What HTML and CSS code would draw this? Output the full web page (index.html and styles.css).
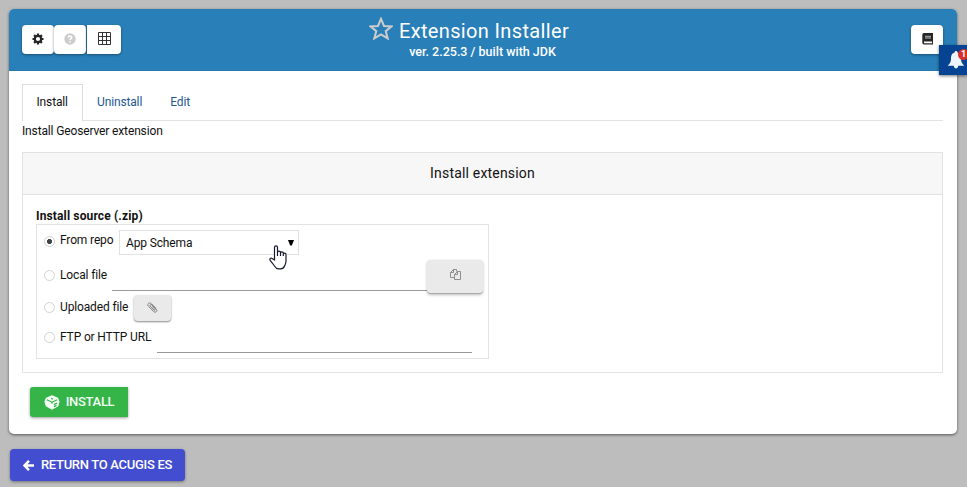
FILE: index.html
```
<!DOCTYPE html>
<html lang="en">
<head>
<meta charset="utf-8">
<title>Extension Installer</title>
<link rel="stylesheet" href="styles.css">
</head>
<body>
<main class="card">
  <header class="header">
    <div class="tools">
      <button class="tool" aria-label="Configuration"><svg width="12" height="12" viewBox="0 0 12 12"><circle cx="6" cy="6" r="3.2" fill="none" stroke="#252525" stroke-width="2.2"/><path d="M6 .5v2M6 9.5v2M.5 6h2M9.5 6h2M2.1 2.1l1.4 1.4M8.5 8.5l1.4 1.4M2.1 9.9l1.4-1.4M8.5 3.5l1.4-1.4" stroke="#252525" stroke-width="2.2"/></svg></button>
      <button class="tool tool-muted" aria-label="Help"><svg width="12" height="12" viewBox="0 0 12 12"><circle cx="6" cy="6" r="5.7" fill="#ccc"/><path d="M4.2 4.6C4.3 2.5 7.9 2.6 7.7 4.6 7.6 5.7 6 5.6 6 7.1M6 8v1.5" fill="none" stroke="#fff" stroke-width="1.5"/></svg></button>
      <button class="tool tool-grid" aria-label="Modules"><svg width="13" height="13" viewBox="0 0 13 13"><path d="M.5.5h12v12H.5zM4.5.5v12M8.5.5v12M.5 4.5h12M.5 8.5h12" fill="none" stroke="#333"/></svg></button>
    </div>
    <div class="heading">
      <h1><svg class="star" width="24" height="23" viewBox="0 0 24 23"><path d="M12 1.8l3 7.2 7.6.4-5.9 4.7 2 7.3-6.7-4-6.7 4 2-7.3L1.4 9.4 9 9z" fill="none" stroke="#ccc" stroke-width="2"/></svg><span>Extension Installer</span></h1>
      <p>ver. 2.25.3 / built with JDK</p>
    </div>
    <button class="tool tool-book" aria-label="Documentation"><svg width="11" height="12" viewBox="0 0 11 12"><path d="M2 0h9v11.5H2A1.8 1.8 0 0 1 .3 9.8V1.8A1.8 1.8 0 0 1 2 0z" fill="#252525"/><path d="M3 3.3h6M3 5h6" stroke="#bbb"/><path d="M2 8.6h8v1.6H2z" fill="#fff"/></svg></button>
  </header>
  <div class="content">
    <nav class="tabs"><a class="tab active">Install</a><a class="tab">Uninstall</a><a class="tab">Edit</a></nav>
    <p class="description">Install Geoserver extension</p>
    <section class="panel">
      <h2>Install extension</h2>
      <div class="panel-body">
        <div class="label">Install source (.zip)</div>
        <div class="sources">
          <div class="row row-repo"><i class="radio checked"></i><span class="name">From repo</span>
            <div class="select"><span>App Schema</span><svg width="6" height="6" viewBox="0 0 6 6"><path d="M0 0h6L3.8 5.5H2.2z"/></svg>
              <svg class="pointer" width="18" height="25" viewBox="0 0 18 25"><path d="M5.5 15V2.5C5.5.3 8.5.3 8.5 2.5V11 7.5c0-1.8 3-1.8 3 0V11 8c0-1.6 2.8-1.6 2.8 0v3V9.2c0-1.4 2.7-1.4 2.7.2V16c0 2.5-.8 3.5-1.5 5-.6 1.9-2 2.9-4 2.9H9.5c-2.2 0-3-1.2-4-2.9L1.2 15.4c-1-1.8.6-3 2-1.8z" fill="#fff" stroke="#16182b" stroke-width="1.2"/></svg>
            </div></div>
          <div class="row row-local"><i class="radio"></i><span class="name">Local file</span><span class="field"></span>
            <button class="file-button" aria-label="Browse"><svg width="11" height="11" viewBox="0 0 11 11"><path d="M3.5 2.5V.5h3v2M3.5.5l-3 3v5H4M3.5.5v3h-3M7.5 2.5h3v8h-6v-5zM7.5 2.5v3h-3" fill="none" stroke="#858585" stroke-width=".9"/></svg></button></div>
          <div class="row row-upload"><i class="radio"></i><span class="name">Uploaded file</span>
            <button class="attach-button" aria-label="Attach"><svg width="11" height="11" viewBox="0 0 11 11"><path d="M8.8 6.2L4.4 1.7C2.2-.3-.5 2.1 1.5 4.3l5.2 5.3c2 1.6 4.2-.5 2.6-2.4L5 2.9C3.7 1.7 2.2 3.3 3.4 4.5l3.7 3.7c.8.7 1.6-.2.9-.9L4.7 4" fill="none" stroke="#777" stroke-width=".9"/></svg></button></div>
          <div class="row row-url"><i class="radio"></i><span class="name">FTP or HTTP URL</span><span class="field"></span></div>
        </div>
      </div>
    </section>
    <button class="install"><svg width="16" height="15" viewBox="0 0 16 15"><path d="M8 .2l6 2.5 1.5 3.8-1.2 4.8L8 14.8l-6.2-3.5L.4 6.5 2 2.7z" fill="#f4fff5"/><path d="M2.8 4.7L8 7.2l5.3-2.5M8 7.2v1.5M7 3.2l2 1M10 9.6l3-1.5M10 11.6l2.5-1.2" fill="none" stroke="#35b548" stroke-width="1.2"/></svg><span>INSTALL</span></button>
  </div>
</main>
<button class="return"><svg width="11" height="11" viewBox="0 0 11 11"><path d="M6 .8L1.5 5.5 6 10.2M1.5 5.5H11" fill="none" stroke="#fff" stroke-width="2.5"/></svg><span>RETURN TO ACUGIS ES</span></button>
<aside class="notifications"><svg width="18" height="18" viewBox="0 0 18 18"><path d="M9 0c1 0 1.4.7 1.4 1.5C13.5 2.3 14 5 14 8c0 3 1.2 4.6 3.3 6.7H.7C2.8 12.6 4 11 4 8c0-3 .5-5.7 3.6-6.5C7.6.7 8 0 9 0zM6.7 14.5h4.6c-.3 3.9-4.3 3.9-4.6 0z" fill="#edf4fa"/></svg><span class="badge">1</span></aside>
</body>
</html>
```
FILE: styles.css
```
* { box-sizing: border-box; }
body { margin: 0; height: 487px; padding: 9px 10px 0 9px; overflow: hidden; background: #bdbdbd; font: 12px/18px Roboto, sans-serif; letter-spacing: -.14px; color: #111; }
button { border: 0; padding: 0; font: inherit; display: flex; align-items: center; justify-content: center; }
h1, h2, p { margin: 0; font-weight: 400; }
svg { display: block; flex: none; }
.card { height: 425px; background: #fff; border-radius: 5px; overflow: hidden; box-shadow: 0 1px 3px #555; }
.header { height: 62px; padding: 16px 14px 0 13px; display: grid; grid-template-columns: 99px 1fr 99px; align-items: start; background: #2980b9; border-bottom: 1px solid #2679b1; }
.tools { display: flex; }
.tool { width: 32px; height: 29px; background: #fff; border-radius: 4px; box-shadow: 0 1px 3px #00000066; padding-bottom: 2px; }
.tool-grid { width: 34px; margin-left: 1px; border-radius: 0 4px 4px 0; }
.tool-book { justify-self: end; }
.heading { color: #fff; margin-top: -10px; text-align: center; }
.heading h1 { display: flex; justify-content: center; gap: 6px; font-size: 20px; line-height: 28px; height: 28px; letter-spacing: .35px; margin-right: 27px; }
.heading h1 span { padding-top: 2px; }
.star { margin-top: 2px; }
.heading p { font-size: 12.5px; line-height: 14px; font-weight: 500; margin-top: 2px; letter-spacing: 0; }
.content { padding: 13px 14px 0 13px; }
.tabs { display: flex; height: 37px; border-bottom: 1px solid #e3e3e3; }
.tab { height: 36px; padding: 9px 14px; color: #24598f; }
.tab.active { width: 61px; height: 37px; border: 1px solid #ddd; border-bottom: 0; background: #fff; color: #111; padding: 8px 13.5px; }
.description { line-height: 20px; height: 31px; }
.panel { height: 221px; border: 1px solid #e3e3e3; }
.panel h2 { height: 42px; border-bottom: 1px solid #e3e3e3; background: #f7f7f7; font-size: 14px; line-height: 40px; text-align: center; letter-spacing: .18px; }
.panel-body { padding: 12px 13px 0; }
.label { height: 17px; font-weight: 700; letter-spacing: .14px; }
.sources { width: 453px; height: 135px; border: 1px solid #e3e3e3; padding: 0 5px 0 7px; }
.row { display: flex; align-items: flex-start; }
.row-repo { height: 35px; padding-top: 5px; }
.row-local { height: 34px; }
.row-upload { height: 34px; }
.row-url { height: 30px; }
.radio { width: 11px; height: 11px; flex: none; border: 1px solid #d2d2d2; border-radius: 50%; margin: 10px 5px 0 0; }
.row-repo .radio { margin-top: 6px; }
.checked { background: radial-gradient(circle, #444 0 2.2px, transparent 2.9px); }
.name { width: 47px; margin-top: 6px; white-space: nowrap; }
.row-repo .name { width: 54px; margin-top: 1px; }
.select { position: relative; width: 180px; height: 25px; margin-left: 5px; border: 1px solid #e1e1e1; padding: 0 4px 0 6px; display: flex; align-items: center; justify-content: space-between; }
.pointer { position: absolute; left: 149px; top: 14px; z-index: 1; }
.field { height: 31px; width: 315px; margin-left: 5px; border-bottom: 1px solid #999; }
.file-button { width: 56px; height: 34px; background: #eaeaea; border-radius: 4px; border-bottom: 1px solid #aaa; box-shadow: 0 1px 3px #0004; padding-bottom: 4px; }
.attach-button { width: 37px; height: 26px; margin: 1px 0 0 5px; background: #eaeaea; border-radius: 4px; box-shadow: 0 1px 2px #0007; padding-bottom: 2px; }
.row-url .radio { margin-top: 4px; }
.row-url .name { width: 92px; margin-top: 0; }
.row-url .field { height: 25px; }
.row-upload .radio { margin-top: 8px; }
.row-upload .name { width: 69px; margin-top: 4px; }
.install { width: 98px; height: 30px; margin: 14px 0 0 8px; gap: 6px; color: #f4fff5; background: #35b548; border-radius: 3px 0 0 3px; box-shadow: 0 1px 3px #0006; font-weight: 500; font-size: 13px; letter-spacing: -.3px; }
.return { width: 175px; height: 32px; margin: 15px 0 0 1px; gap: 7px; background: #434dcf; color: #fff; border-radius: 4px; box-shadow: 0 1px 3px #0006; font-size: 13px; font-weight: 500; letter-spacing: -.3px; }
.notifications { position: absolute; top: 45px; right: 0; width: 28px; height: 30px; padding: 6px 0 0 8px; background: #064493; box-shadow: 0 1px 3px #0008; overflow: hidden; }
.badge { position: absolute; left: 19px; top: 4px; width: 11px; height: 11px; border-radius: 50%; background: #d6302b; color: #fff; font-size: 9px; line-height: 11px; font-weight: 700; text-align: center; }
```
